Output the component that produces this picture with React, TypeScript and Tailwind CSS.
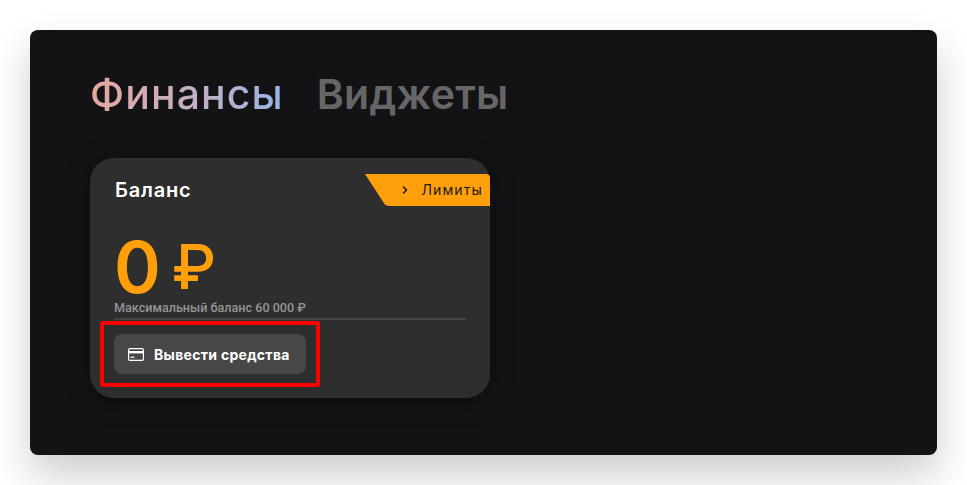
export default function App() {
  return (
    <div className="h-[485px] w-[967px] overflow-hidden bg-white px-[30px] pt-[30px] font-['Inter',sans-serif]">
      <div className="h-[425px] w-[907px] rounded-[8px] bg-[#131315] pl-[60px] pt-[40px] shadow-[0_20px_40px_rgba(0,0,0,0.2)]">
        <div className="flex h-[48px] items-center gap-[33px] text-[41px] font-medium leading-[48px]">
          <span className="bg-gradient-to-r from-[#e5a79c] via-[#c5afc4] to-[#96b4e6] bg-clip-text tracking-[1.1px] text-transparent">Финансы</span>
          <span className="font-semibold tracking-[0.25px] text-[#666666]">Виджеты</span>
        </div>
        <div className="relative mt-[40px] h-[240px] w-[400px] rounded-[24px] bg-[#2e2e2e] pl-[24px] pt-[20px] shadow-[0_4px_24px_rgba(0,0,0,0.35)]">
          <div className="flex items-start justify-between">
            <span className="ml-[1px] text-[20px] font-semibold leading-[25px] tracking-[0.8px] text-white">Баланс</span>
            <div className="mt-[-4px] flex h-[32px] w-[125px] items-center justify-end gap-[12px] rounded-tr-[4px] bg-[#ff9f0a] pr-[7px] [clip-path:polygon(0_0,100%_0,100%_100%,19%_100%,16%_96%)]">
              <svg width="10" height="10" viewBox="0 0 10 10" fill="none" stroke="#1a1a1a" strokeWidth="1.5"><path d="M3 1.5 6.5 5 3 8.5" /></svg>
              <span className="text-[14px] font-normal leading-[20px] tracking-[1.1px] text-[#1a1a1a]">Лимиты</span>
            </div>
          </div>
          <div className="mt-[28px] flex h-[66px] items-center gap-[11px] text-[71px] font-semibold leading-[66px] text-[#ff9f0a]">
            <span>0</span>
            <span className="text-[62px] font-medium">₽</span>
          </div>
          <div className="h-[20px] w-[352px] border-b-2 border-[#454545] font-['Roboto',sans-serif] text-[12.6px] font-medium leading-[15px] text-[#949494]">Максимальный баланс 60 000 ₽</div>
          <button className="mt-[14px] flex h-[40px] w-[192px] items-center gap-[10px] rounded-[8px] bg-[#474747] pl-[14px] text-[14px] font-bold tracking-[0.3px] text-white">
            <svg width="16" height="13" viewBox="0 0 16 13" fill="none">
              <rect x="0.6" y="0.6" width="14.8" height="11.8" rx="1.2" stroke="white" strokeWidth="1.2" />
              <rect x="1" y="3" width="14" height="2.4" fill="white" />
              <rect x="2.5" y="8.6" width="4" height="1.2" fill="white" />
            </svg>
            <span>Вывести средства</span>
          </button>
          <div className="absolute left-[10px] top-[163px] h-[66px] w-[220px] rounded-[3px] border-[4px] border-[#ff0000]" />
        </div>
      </div>
    </div>
  );
}
